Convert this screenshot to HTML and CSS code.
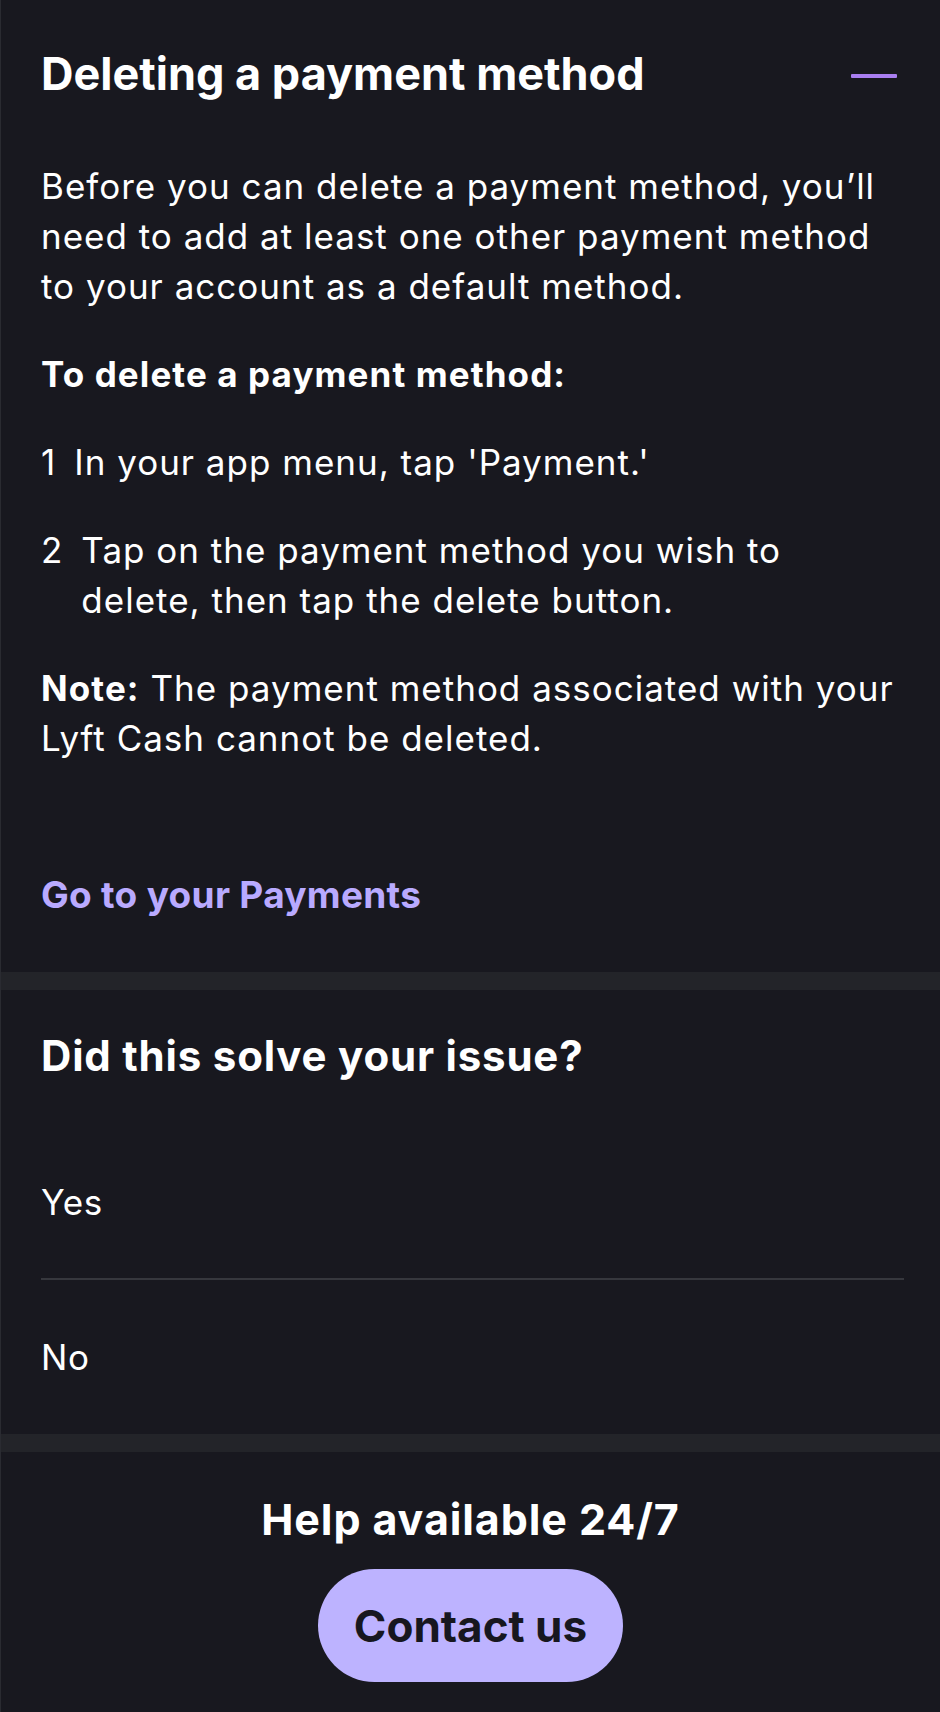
FILE: index.html
```html
<!DOCTYPE html>
<html lang="en">
<head>
<meta charset="utf-8">
<title>Deleting a payment method</title>
<link rel="stylesheet" href="styles.css">
</head>
<body>
<main class="page">
  <section class="article">
    <div class="article-head">
      <h2 class="article-title">Deleting a payment method</h2>
      <span class="collapse-icon" aria-label="Collapse"></span>
    </div>
    <p class="text">Before you can delete a payment method, you’ll need to add at least one other payment method to your account as a default method.</p>
    <p class="text strong">To delete a payment method:</p>
    <ol class="steps">
      <li class="step"><span class="step-num">1</span><span class="step-text">In your app menu, tap 'Payment.'</span></li>
      <li class="step"><span class="step-num">2</span><span class="step-text">Tap on the payment method you wish to delete, then tap the delete button.</span></li>
    </ol>
    <p class="text"><b>Note:</b> The payment method associated with your Lyft Cash cannot be deleted.</p>
    <a class="link" href="#">Go to your Payments</a>
  </section>
  <div class="band"></div>
  <section class="feedback">
    <h3 class="feedback-title">Did this solve your issue?</h3>
    <div class="options">
      <div class="option">Yes</div>
      <div class="option">No</div>
    </div>
  </section>
  <div class="band"></div>
  <section class="help">
    <h3 class="help-title">Help available 24/7</h3>
    <button class="contact-btn" type="button">Contact us</button>
  </section>
</main>
</body>
</html>
```
FILE: styles.css
```css
html, body {
  margin: 0;
  padding: 0;
  background: #18181f;
}
body {
  font-family: "Inter", "Lato", "Liberation Sans", sans-serif;
  color: #ffffff;
  width: 940px;
  height: 1712px;
  overflow: hidden;
}
.page {
  border-left: 1px solid #2a2b31;
  min-height: 1712px;
  box-sizing: border-box;
}
.article {
  padding: 46px 36px 0 40px;
}
.article-head {
  display: flex;
  justify-content: space-between;
  align-items: flex-start;
}
.article-title {
  margin: 0;
  font-size: 45px;
  line-height: 56px;
  font-weight: 700;
}
.collapse-icon {
  display: block;
  flex: 0 0 auto;
  width: 46px;
  height: 4px;
  margin-top: 28px;
  margin-right: 7px;
  background: #a97ef0;
  border-radius: 1px;
}
.text {
  margin: 0;
  font-size: 35px;
  line-height: 50px;
  letter-spacing: 1px;
  font-weight: 400;
}
.article-head + .text {
  margin-top: 59px;
}
.text + .text, .steps + .text {
  margin-top: 38px;
}
.strong, .text b {
  font-weight: 700;
  letter-spacing: 1.1px;
}
.steps {
  list-style: none;
  margin: 38px 0 0;
  padding: 0 40px 0 0;
  display: flex;
  flex-direction: column;
  gap: 38px;
}
.step {
  display: flex;
  gap: 18px;
  font-size: 35px;
  line-height: 50px;
  letter-spacing: 1px;
}
.step-num {
  flex: 0 0 auto;
}
.step-text {
  flex: 1;
}
.link {
  display: block;
  margin-top: 107px;
  padding-bottom: 52px;
  font-size: 37px;
  line-height: 50px;
  letter-spacing: 0.3px;
  font-weight: 700;
  color: #b9aaff;
  text-decoration: none;
}
.band {
  height: 18px;
  background: #232429;
}
.feedback {
  padding: 42px 36px 0 40px;
}
.feedback-title {
  margin: 0 0 45px;
  font-size: 42px;
  line-height: 48px;
  letter-spacing: 0.8px;
  font-weight: 700;
}
.options {
  display: flex;
  flex-direction: column;
}
.option {
  padding: 52px 0;
  font-size: 35px;
  line-height: 50px;
  letter-spacing: 0.6px;
}
.option:first-child {
  padding-bottom: 51px;
  border-bottom: 2px solid #36373d;
}
.help {
  display: flex;
  flex-direction: column;
  align-items: center;
  padding-top: 42px;
}
.help-title {
  margin: 0 0 25px;
  font-size: 43px;
  line-height: 50px;
  letter-spacing: 0.9px;
  font-weight: 700;
}
.contact-btn {
  width: 305px;
  height: 113px;
  border: none;
  border-radius: 57px;
  background: #bdb3ff;
  color: #17171f;
  font-family: "Inter", "Lato", "Liberation Sans", sans-serif;
  font-size: 44px;
  font-weight: 700;
  padding: 0;
}
```
